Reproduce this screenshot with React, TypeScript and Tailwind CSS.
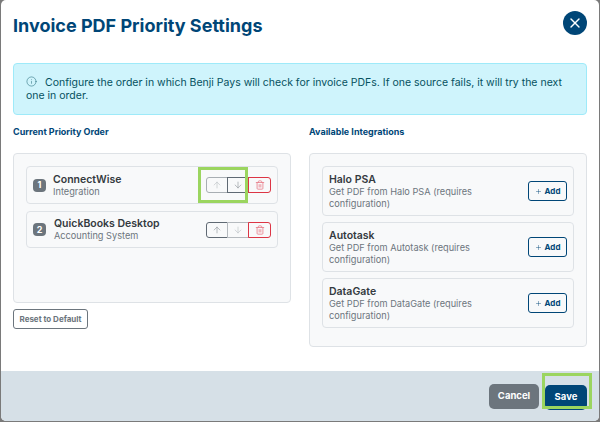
import React from 'react';
import { ArrowDown, ArrowUp, Info, Plus, Trash2, X } from 'lucide-react';

const priority = [
  { id: 1, name: 'ConnectWise', type: 'Integration', upOff: true },
  { id: 2, name: 'QuickBooks Desktop', type: 'Accounting System', upOff: false },
];

const available = ['Halo PSA', 'Autotask', 'DataGate'];

function PriorityRow({ item }: { item: (typeof priority)[number] }) {
  return (
    <div className={`relative flex ${item.upOff ? 'h-[38px]' : 'h-[37px]'} items-center rounded-[4px] border border-[#dee2e6] bg-[#f8f9fa] px-[6px]`}>
      <span className="flex h-[13px] w-[13px] items-center justify-center rounded-[4px] bg-[#6c757d] text-[9px] font-bold text-white">
        {item.id}
      </span>
      <div className={`${item.upOff ? 'ml-[7px]' : 'ml-[8px]'} flex-1`}>
        <div className="text-[10.5px] leading-[13px] font-semibold text-[#343a40]">{item.name}</div>
        <div className="text-[9.2px] leading-[12px] text-[#6c757d]">{item.type}</div>
      </div>
      <div className="flex h-[16px]">
        <button className={`flex w-[22px] items-center justify-center rounded-l-[3px] border ${item.upOff ? 'border-[#a8aeb3] text-[#bcc1c5]' : 'border-[#5f6973] text-[#8f959b]'}`}>
          <ArrowUp size={10} strokeWidth={1.5} />
        </button>
        <button className={`-ml-px flex w-[22px] items-center justify-center border ${item.upOff ? 'border-[#5f6973] text-[#8f959b]' : 'border-[#b4b9be] text-[#bcc1c5]'}`}>
          <ArrowDown size={10} strokeWidth={1.5} />
        </button>
        <button className="-ml-px flex w-[23px] items-center justify-center rounded-r-[3px] border border-[#dc3545] text-[#e8808b]">
          <Trash2 size={10} strokeWidth={2} />
        </button>
      </div>
      {item.upOff && (
        <div className="absolute top-0 left-[171px] h-[36px] w-[50px] border-[3px] border-[#9bd55f]" />
      )}
    </div>
  );
}

function AvailableRow({ name }: { name: string }) {
  return (
    <div className="flex h-[50px] items-center rounded-[4px] border border-[#dee2e6] bg-[#f8f9fa] px-[6px]">
      <div className="flex-1">
        <div className="text-[10.5px] leading-[13px] font-semibold text-[#343a40]">{name}</div>
        <div className="w-[160px] text-[9.2px] leading-[12px] text-[#6c757d]">
          {`Get PDF from ${name} (requires configuration)`}
        </div>
      </div>
      <button className="flex h-[20px] w-[39px] items-center justify-center gap-[3px] rounded-[3px] border border-[#004677] text-[8px] font-bold text-[#004677]">
        <Plus size={7} strokeWidth={1.5} />
        Add
      </button>
    </div>
  );
}

export default function App() {
  return (
    <div className="h-[422px] w-[600px] bg-[#7a7a7a] pb-px pl-px pr-px font-['Inter',sans-serif]">
      <div className="flex h-full flex-col overflow-hidden rounded-[5px] bg-white">
        <div className="flex h-[46px] items-center justify-between pt-[4px] pl-3 pr-[12px]">
          <h1 className="text-[18px] font-bold text-[#004677]">Invoice PDF Priority Settings</h1>
          <button className="-mt-[4px] flex h-6 w-6 items-center justify-center rounded-full bg-[#004677] text-white">
            <X size={16} strokeWidth={2} />
          </button>
        </div>

        <div className="flex-1 px-3 pt-[17px]">
          <div className="h-[52px] rounded-[4px] border border-[#9eeaf9] bg-[#cff4fc] px-3 pt-[12px] text-[10.5px] leading-[13px] text-[#055160]">
            <Info size={11} strokeWidth={1} className="mr-[8px] inline align-[-1px]" />
            Configure the order in which Benji Pays will check for invoice PDFs. If one source fails, it will try the next one in order.
          </div>

          <div className="mt-[11px] grid grid-cols-[278px_278px] gap-x-[18px]">
            <div>
              <h2 className="text-[9px] leading-[12px] font-bold text-[#004677]">Current Priority Order</h2>
              <div className="mt-[15px] flex h-[150px] flex-col gap-[7px] rounded-[4px] border border-[#dee2e6] bg-[#f8f9fa] p-3">
                {priority.map((item) => (
                  <PriorityRow key={item.id} item={item} />
                ))}
              </div>
              <button className="mt-[6px] h-[20px] w-[75px] rounded-[3px] border border-[#6c757d] text-[8px] font-bold text-[#6c757d]">
                Reset to Default
              </button>
            </div>
            <div>
              <h2 className="text-[9px] leading-[12px] font-bold text-[#004677]">Available Integrations</h2>
              <div className="mt-[15px] flex h-[194px] flex-col gap-[6px] rounded-[4px] border border-[#dee2e6] bg-[#f8f9fa] p-3">
                {available.map((name) => (
                  <AvailableRow key={name} name={name} />
                ))}
              </div>
            </div>
          </div>
        </div>

        <div className="flex h-[50px] items-center justify-end gap-[6px] bg-[#d6e0e7] pr-[12px]">
          <button className="h-[25px] w-[50px] rounded-[5px] bg-[#6c757d] text-[9.5px] font-bold text-white">Cancel</button>
          <div className="relative">
            <button className="h-[25px] w-[42px] rounded-[5px] bg-[#004677] text-[9.5px] font-bold text-white">Save</button>
            <div className="absolute -top-[9px] -left-[3px] h-[36px] w-[50px] border-[3px] border-[#9bd55f]" />
          </div>
        </div>
      </div>
    </div>
  );
}
